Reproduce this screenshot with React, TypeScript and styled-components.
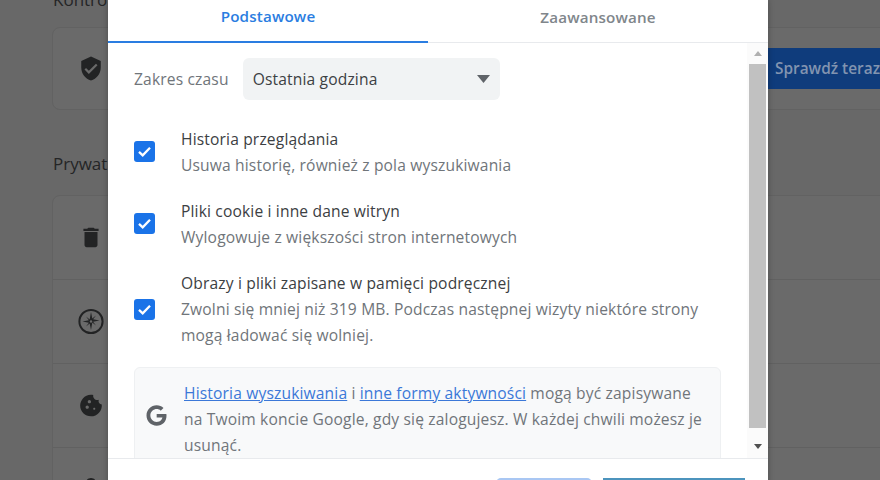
import React from "react";
import styled, { createGlobalStyle } from "styled-components";
import { MdCookie, MdDelete, MdLock, MdVerifiedUser } from "react-icons/md";
import { FaGoogle } from "react-icons/fa";

const Global = createGlobalStyle`
  html, body { margin: 0; padding: 0; background: #686868; }
  * { box-sizing: border-box; }
  body { font-family: "Open Sans", "Noto Sans", "Liberation Sans", sans-serif; }
`;

const Page = styled.div`
  position: relative;
  width: 880px;
  height: 480px;
  overflow: hidden;
  background: #686868;
`;

const Backdrop = styled.div`
  width: 880px;
  margin-left: 52px;
  display: flex;
  flex-direction: column;
`;

const SectionTitle = styled.h2<{ $top: number; $height: number }>`
  margin: ${(p) => p.$top}px 0 0 1px;
  height: ${(p) => p.$height}px;
  font-size: 17px;
  font-weight: 400;
  line-height: 26px;
  color: #242526;
  white-space: nowrap;
`;

const Card = styled.section`
  background: #6a6a6a;
  border-radius: 8px;
  border: 1px solid #626262;
`;

const SafetyCard = styled(Card)`
  height: 83px;
  display: flex;
  align-items: center;
  justify-content: space-between;
  padding: 0 19px 0 25px;
  color: #222324;
`;

const CheckButton = styled.button`
  width: 145px;
  height: 41px;
  border: 0;
  padding: 0 0 0 8px;
  background: #0f3c7c;
  color: #8294b0;
  font: 600 15.4px "Open Sans", sans-serif;
  text-align: left;
  white-space: nowrap;
`;

const PrivacyCard = styled(Card)`
  display: flex;
  flex-direction: column;
`;

const PrivacyRow = styled.div`
  height: 84px;
  flex: none;
  display: flex;
  align-items: center;
  padding-left: 25px;
  color: #222324;
  border-bottom: 1px solid #616161;
`;

const IconSlot = styled.span`
  width: 26px;
  height: 26px;
  display: flex;
  align-items: center;
  justify-content: center;
`;

const Dialog = styled.div`
  position: absolute;
  left: 108px;
  top: 0;
  width: 660px;
  height: 520px;
  display: flex;
  flex-direction: column;
  background: #fff;
  letter-spacing: 0.15px;
  box-shadow: 0 0 6px rgba(0, 0, 0, 0.28);
`;

const Tabs = styled.div`
  flex: none;
  height: 43px;
  display: grid;
  grid-template-columns: 320px 340px;
  border-bottom: 1px solid #e8eaed;
`;

const Tab = styled.div<{ $active?: boolean }>`
  height: ${(p) => (p.$active ? 43 : 42)}px;
  display: flex;
  align-items: center;
  justify-content: center;
  padding-bottom: 9px;
  font-size: 15.2px;
  font-weight: 600;
  color: ${(p) => (p.$active ? "#2a7de1" : "#80868b")};
  border-bottom: ${(p) => (p.$active ? "2.5px solid #2a7de1" : "0")};
`;

const Body = styled.div`
  flex: none;
  height: 416px;
  display: flex;
  overflow: hidden;
  border-bottom: 1px solid #e8eaed;
`;

const Content = styled.div`
  flex: 1;
  min-width: 0;
  padding: 15px 26px 0 26px;
`;

const RangeRow = styled.div`
  display: flex;
  align-items: center;
  gap: 14px;
  margin-bottom: 25.5px;
`;

const RangeLabel = styled.span`
  font-size: 15.6px;
  color: #70757a;
`;

const Select = styled.div`
  width: 257px;
  height: 42px;
  border-radius: 6px;
  background: #f1f3f4;
  display: flex;
  align-items: center;
  justify-content: space-between;
  padding: 0 10px;
  font-size: 15.6px;
  color: #3c4043;
`;

const Option = styled.div`
  display: flex;
  align-items: center;
  margin-bottom: 20.25px;
`;

const CheckBox = styled.span`
  flex: none;
  width: 21px;
  height: 21px;
  border-radius: 3px;
  background: #1a73e8;
  display: flex;
  margin-right: 26px;
`;

const OptionText = styled.div`
  flex: 1;
  font-size: 15.6px;
  line-height: 26px;
  white-space: nowrap;
`;

const OptionTitle = styled.div`
  color: #3c4043;
`;

const OptionDesc = styled.div`
  color: #70757a;
`;

const InfoBox = styled.div`
  display: flex;
  align-items: center;
  margin-top: -1.75px;
  padding: 0 12px 0 11px;
  height: 104px;
  border-radius: 6px;
  border: 1px solid #eef0f2;
  background: #f8f9fa;
  font-size: 15.6px;
  line-height: 26px;
  color: #70757a;
`;

const GoogleMark = styled.span`
  flex: none;
  width: 38px;
  margin-top: -6px;
  display: flex;
  color: #5f6368;
`;

const InfoLink = styled.a`
  color: #3b78d8;
  text-decoration: underline;
`;

const Scrollbar = styled.div`
  flex: none;
  width: 21px;
  display: flex;
  flex-direction: column;
  padding: 0 2px;
  background: #fbfbfb;
`;

const ScrollArrow = styled.div<{ $color: string; $down?: boolean }>`
  height: ${(p) => (p.$down ? 30 : 21)}px;
  padding-top: ${(p) => (p.$down ? 6 : 0)}px;
  flex: none;
  display: flex;
  align-items: center;
  justify-content: center;
  &::before {
    content: "";
    width: 0;
    height: 0;
    border-left: 4.5px solid transparent;
    border-right: 4.5px solid transparent;
    ${(p) => (p.$down ? "border-top" : "border-bottom")}: 5px solid ${(p) => p.$color};
  }
`;

const ScrollThumb = styled.div`
  flex: 1;
  background: #c1c1c1;
`;

const Footer = styled.div`
  flex: none;
  display: flex;
  justify-content: flex-end;
  gap: 11px;
  padding: 19px 23px 0 0;
`;

const CancelButton = styled.button`
  width: 96px;
  height: 36px;
  padding: 0;
  border: 0;
  border-radius: 5px;
  background: #fff;
  border-top: 2px solid #a9c7f3;
`;

const ConfirmButton = styled.button`
  width: 142px;
  height: 36px;
  padding: 0;
  border: 0;
  background: #1a73e8;
  border-top: 2px solid #4c94bd;
`;

const Compass = () => (
  <svg width="27" height="27" viewBox="0 0 26 26" fill="none">
    <circle cx="13" cy="13" r="11.6" stroke="currentColor" strokeWidth="2" />
    <path
      fill="currentColor"
      d="M13 3.6l1.3 6.4 3.7-2.9-2.9 3.7 6.4 1.2-6.4 1.3 2.9 3.7-3.7-2.9L13 21.5l-1.3-6.4L8 18l2.9-3.7-6.4-1.3 6.4-1.2L8 8l3.7 2.9z"
    />
    <circle cx="13" cy="13" r="1.2" fill="#6a6a6a" />
  </svg>
);

const Caret = () => (
  <svg width="13" height="8" viewBox="0 0 13 8">
    <path d="M0 0h13L6.5 8z" fill="#5f6368" />
  </svg>
);

const CheckMark = () => (
  <svg width="21" height="21" viewBox="0 0 21 21" fill="none">
    <path d="M5 10.8l3.7 3.5 7.3-7.6" stroke="#fff" strokeWidth="2.3" />
  </svg>
);

const options = [
  {
    title: "Historia przeglądania",
    desc: ["Usuwa historię, również z pola wyszukiwania"],
  },
  {
    title: "Pliki cookie i inne dane witryn",
    desc: ["Wylogowuje z większości stron internetowych"],
  },
  {
    title: "Obrazy i pliki zapisane w pamięci podręcznej",
    desc: [
      "Zwolni się mniej niż 319 MB. Podczas następnej wizyty niektóre strony",
      "mogą ładować się wolniej.",
    ],
  },
];

export default function App() {
  return (
    <Page>
      <Global />
      <Backdrop>
        <SectionTitle $top={-13} $height={40}>Kontrola bezpieczeństwa</SectionTitle>
        <SafetyCard>
          <IconSlot><MdVerifiedUser size={27} /></IconSlot>
          <CheckButton>Sprawdź teraz</CheckButton>
        </SafetyCard>
        <SectionTitle $top={41} $height={44}>Prywatność i bezpieczeństwo</SectionTitle>
        <PrivacyCard>
          <PrivacyRow><IconSlot><MdDelete size={27} /></IconSlot></PrivacyRow>
          <PrivacyRow><IconSlot><Compass /></IconSlot></PrivacyRow>
          <PrivacyRow><IconSlot><MdCookie size={27} /></IconSlot></PrivacyRow>
          <PrivacyRow><IconSlot><MdLock size={26} /></IconSlot></PrivacyRow>
        </PrivacyCard>
      </Backdrop>
      <Dialog>
        <Tabs>
          <Tab $active>Podstawowe</Tab>
          <Tab>Zaawansowane</Tab>
        </Tabs>
        <Body>
          <Content>
            <RangeRow>
              <RangeLabel>Zakres czasu</RangeLabel>
              <Select>
                Ostatnia godzina
                <Caret />
              </Select>
            </RangeRow>
            {options.map((o) => (
              <Option key={o.title}>
                <CheckBox><CheckMark /></CheckBox>
                <OptionText>
                  <OptionTitle>{o.title}</OptionTitle>
                  {o.desc.map((d) => (
                    <OptionDesc key={d}>{d}</OptionDesc>
                  ))}
                </OptionText>
              </Option>
            ))}
            <InfoBox>
              <GoogleMark><FaGoogle size={21} /></GoogleMark>
              <div>
                <InfoLink>Historia wyszukiwania</InfoLink> i <InfoLink>inne formy aktywności</InfoLink> mogą być zapisywane na Twoim koncie Google, gdy się zalogujesz. W każdej chwili możesz je usunąć.
              </div>
            </InfoBox>
          </Content>
          <Scrollbar>
            <ScrollArrow $color="#b0b0b0" />
            <ScrollThumb />
            <ScrollArrow $color="#505050" $down />
          </Scrollbar>
        </Body>
        <Footer>
          <CancelButton aria-label="Anuluj" />
          <ConfirmButton aria-label="Usuń dane" />
        </Footer>
      </Dialog>
    </Page>
  );
}
